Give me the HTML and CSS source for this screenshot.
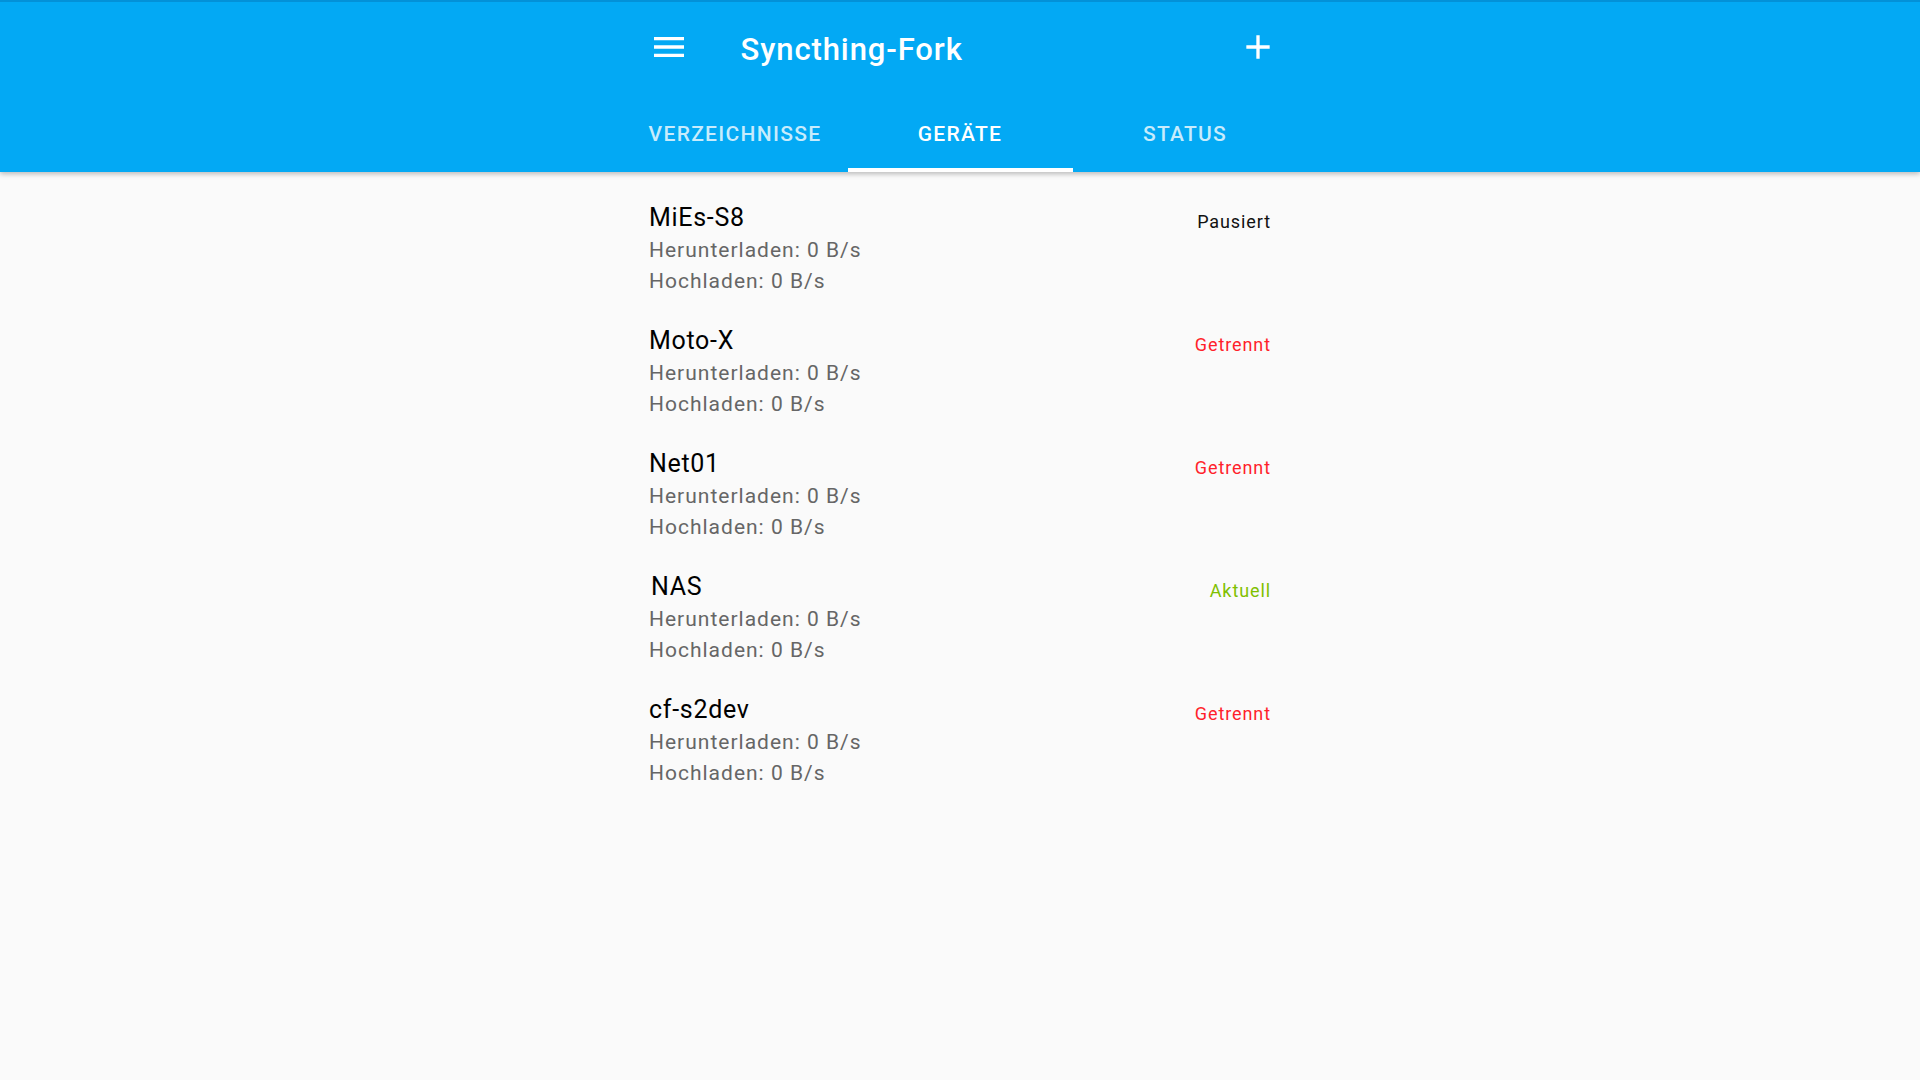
FILE: index.html
```html
<!DOCTYPE html>
<html lang="de">
<head>
<meta charset="utf-8">
<title>Syncthing-Fork</title>
<link rel="stylesheet" href="styles.css">
</head>
<body>
<header class="appbar">
  <div class="appbar-inner">
    <div class="toolbar">
      <span class="icon-btn menu">
        <svg viewBox="0 0 24 24" width="40" height="40"><path d="M3 18h18v-2H3v2zm0-5h18v-2H3v2zm0-7v2h18V6H3z" fill="#fff"/></svg>
      </span>
      <h1 class="title">Syncthing-Fork</h1>
      <span class="icon-btn add">
        <svg viewBox="0 0 24 24" width="40" height="40"><path d="M19 13h-6v6h-2v-6H5v-2h6V5h2v6h6v2z" fill="#fff"/></svg>
      </span>
    </div>
    <nav class="tabs">
      <div class="tab">VERZEICHNISSE</div>
      <div class="tab active">GERÄTE</div>
      <div class="tab">STATUS</div>
    </nav>
  </div>
</header>
<main class="list">
  <div class="device">
    <div class="device-head"><span class="name">MiEs-S8</span><span class="state paused">Pausiert</span></div>
    <div class="rate">Herunterladen: 0 B/s</div>
    <div class="rate">Hochladen: 0 B/s</div>
  </div>
  <div class="device">
    <div class="device-head"><span class="name">Moto-X</span><span class="state off">Getrennt</span></div>
    <div class="rate">Herunterladen: 0 B/s</div>
    <div class="rate">Hochladen: 0 B/s</div>
  </div>
  <div class="device">
    <div class="device-head"><span class="name">Net01</span><span class="state off">Getrennt</span></div>
    <div class="rate">Herunterladen: 0 B/s</div>
    <div class="rate">Hochladen: 0 B/s</div>
  </div>
  <div class="device">
    <div class="device-head"><span class="name nas">NAS</span><span class="state ok">Aktuell</span></div>
    <div class="rate">Herunterladen: 0 B/s</div>
    <div class="rate">Hochladen: 0 B/s</div>
  </div>
  <div class="device">
    <div class="device-head"><span class="name">cf-s2dev</span><span class="state off">Getrennt</span></div>
    <div class="rate">Herunterladen: 0 B/s</div>
    <div class="rate">Hochladen: 0 B/s</div>
  </div>
</main>
</body>
</html>
```
FILE: styles.css
```css
* { box-sizing: border-box; }
html, body {
  margin: 0;
  padding: 0;
  height: 100%;
}
body {
  background: #fafafa;
  font-family: Roboto, "Noto Sans", sans-serif;
  overflow: hidden;
}
.appbar {
  background: #03a9f4;
  border-top: 2px solid #0391d8;
  height: 172px;
  box-shadow: 0 2px 5px rgba(0,0,0,0.26);
  position: relative;
  z-index: 1;
}
.appbar-inner {
  width: 675px;
  margin: 0 auto;
}
.toolbar {
  height: 92px;
  display: flex;
  align-items: center;
  padding: 0 20px 0 26px;
}
.icon-btn {
  width: 40px;
  height: 40px;
  display: flex;
  margin-top: -2px;
}
.title {
  margin: 2px 0 0 52px;
  flex: 1;
  color: #fff;
  font-size: 31px;
  font-weight: 500;
  letter-spacing: 0.9px;
}
.tabs {
  display: flex;
  height: 78px;
}
.tab {
  width: 225px;
  display: flex;
  align-items: center;
  justify-content: center;
  color: rgba(255,255,255,0.78);
  font-size: 21px;
  font-weight: 500;
  letter-spacing: 1.3px;
  border-bottom: 4px solid transparent;
  padding-top: 6px;
}
.tab.active {
  color: #fff;
  border-bottom-color: #fff;
}
.list {
  width: 622px;
  margin: 0 auto;
  padding-top: 16px;
}
.device {
  padding: 14px 0;
}
.device-head {
  display: flex;
  justify-content: space-between;
  align-items: baseline;
  height: 33px;
  line-height: 32px;
}
.name {
  font-size: 25px;
  letter-spacing: 0.7px;
  color: #000;
}
.name.nas { margin-left: 2px; }
.state {
  font-size: 18px;
  letter-spacing: 0.9px;
  position: relative;
  top: 2px;
}
.paused { color: #111; }
.off { color: #ff1f2b; }
.ok { color: #7fc000; }
.rate {
  font-size: 21px;
  line-height: 31px;
  letter-spacing: 1px;
  color: #666;
}
```
